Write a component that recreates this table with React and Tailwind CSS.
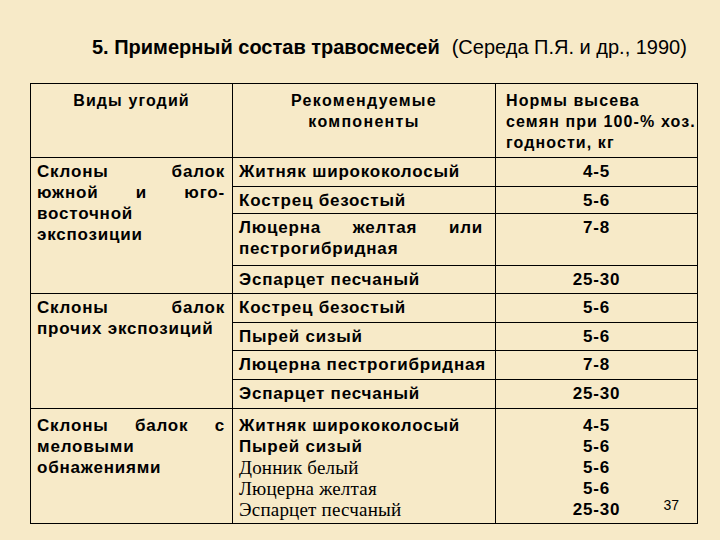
const rows = [
  { h: "h-[29px]", comp: "Житняк ширококолосый", norm: "4-5" },
  { h: "h-[27px]", comp: "Кострец безостый", norm: "5-6" },
  { h: "h-[52px]", comp: "Люцерна желтая или пестрогибридная", norm: "7-8", wrap: true },
  { h: "h-[28px]", comp: "Эспарцет песчаный", norm: "25-30" },
];

const rows2 = [
  { h: "h-[29px]", comp: "Кострец безостый", norm: "5-6" },
  { h: "h-[28px]", comp: "Пырей сизый", norm: "5-6" },
  { h: "h-[29px]", comp: "Люцерна пестрогибридная", norm: "7-8" },
  { h: "h-[29px]", comp: "Эспарцет песчаный", norm: "25-30" },
];

const cell = "border border-black align-top";

const Group = ({ title, items }) => (
  <>
    {items.map((r, i) => (
      <tr key={i} className={r.h}>
        {i === 0 && (
          <td rowSpan={items.length} className={`${cell} pl-[6px] pr-[7px] pt-[3px] text-justify`}>
            {title}
          </td>
        )}
        <td
          className={`${cell} pl-[6px] pr-3 pt-[3px] text-justify ${r.wrap ? "" : "whitespace-nowrap"}`}
        >
          {r.comp}
        </td>
        <td className={`${cell} pt-[3px] text-center`}>{r.norm}</td>
      </tr>
    ))}
  </>
);

export default function App() {
  return (
    <div
      className="w-[720px] h-[540px] bg-[#f7eac8] relative overflow-hidden text-black"
      style={{ fontFamily: '"Liberation Sans", Arial, sans-serif' }}
    >
      <div className="pt-[35px] pl-[92px] text-[20px] leading-[24px] h-[83px] whitespace-nowrap">
        <span className="font-bold">5. Примерный состав травосмесей</span>
        <span className="ml-[12px]">(Середа П.Я. и др., 1990)</span>
      </div>
      <table className="ml-[30px] w-[667px] table-fixed border-collapse text-[17px] leading-[21px] font-bold tracking-[0.8px]">
        <colgroup>
          <col className="w-[202px]" />
          <col className="w-[263px]" />
          <col className="w-[202px]" />
        </colgroup>
        <tbody>
          <tr className="h-[74px] text-[16px]">
            <td className={`${cell} pt-[6px] text-center tracking-[1.1px]`}>Виды угодий</td>
            <td className={`${cell} pt-[6px] text-center tracking-[1.3px]`}>
              Рекомендуемые
              <br />
              компоненты
            </td>
            <td className={`${cell} pt-[6px] pl-[10px] pr-0 whitespace-nowrap tracking-[1.1px]`}>
              Нормы высева
              <br />
              семян при 100-% хоз.
              <br />
              годности, кг
            </td>
          </tr>
          <Group
            title="Склоны балок южной и юго-восточной экспозиции"
            items={rows}
          />
          <Group title="Склоны балок прочих экспозиций" items={rows2} />
          <tr className="h-[115px]">
            <td className={`${cell} pl-[6px] pr-[7px] pt-[6px] text-justify`}>
              Склоны балок с меловыми обнажениями
            </td>
            <td className={`${cell} pl-[6px] pt-[6px] whitespace-nowrap`}>
              <div>Житняк ширококолосый</div>
              <div>Пырей сизый</div>
              <div
                className="font-normal text-[19px] tracking-[0.2px]"
                style={{ fontFamily: '"Liberation Serif", "Times New Roman", serif' }}
              >
                <div>Донник белый</div>
                <div>Люцерна желтая</div>
                <div>Эспарцет песчаный</div>
              </div>
            </td>
            <td className={`${cell} pt-[6px] text-center relative`}>
              <div>4-5</div>
              <div>5-6</div>
              <div>5-6</div>
              <div>5-6</div>
              <div>25-30</div>
              <span className="absolute right-[18px] bottom-[7px] text-[14px] font-normal tracking-normal">37</span>
            </td>
          </tr>
        </tbody>
      </table>
    </div>
  );
}
